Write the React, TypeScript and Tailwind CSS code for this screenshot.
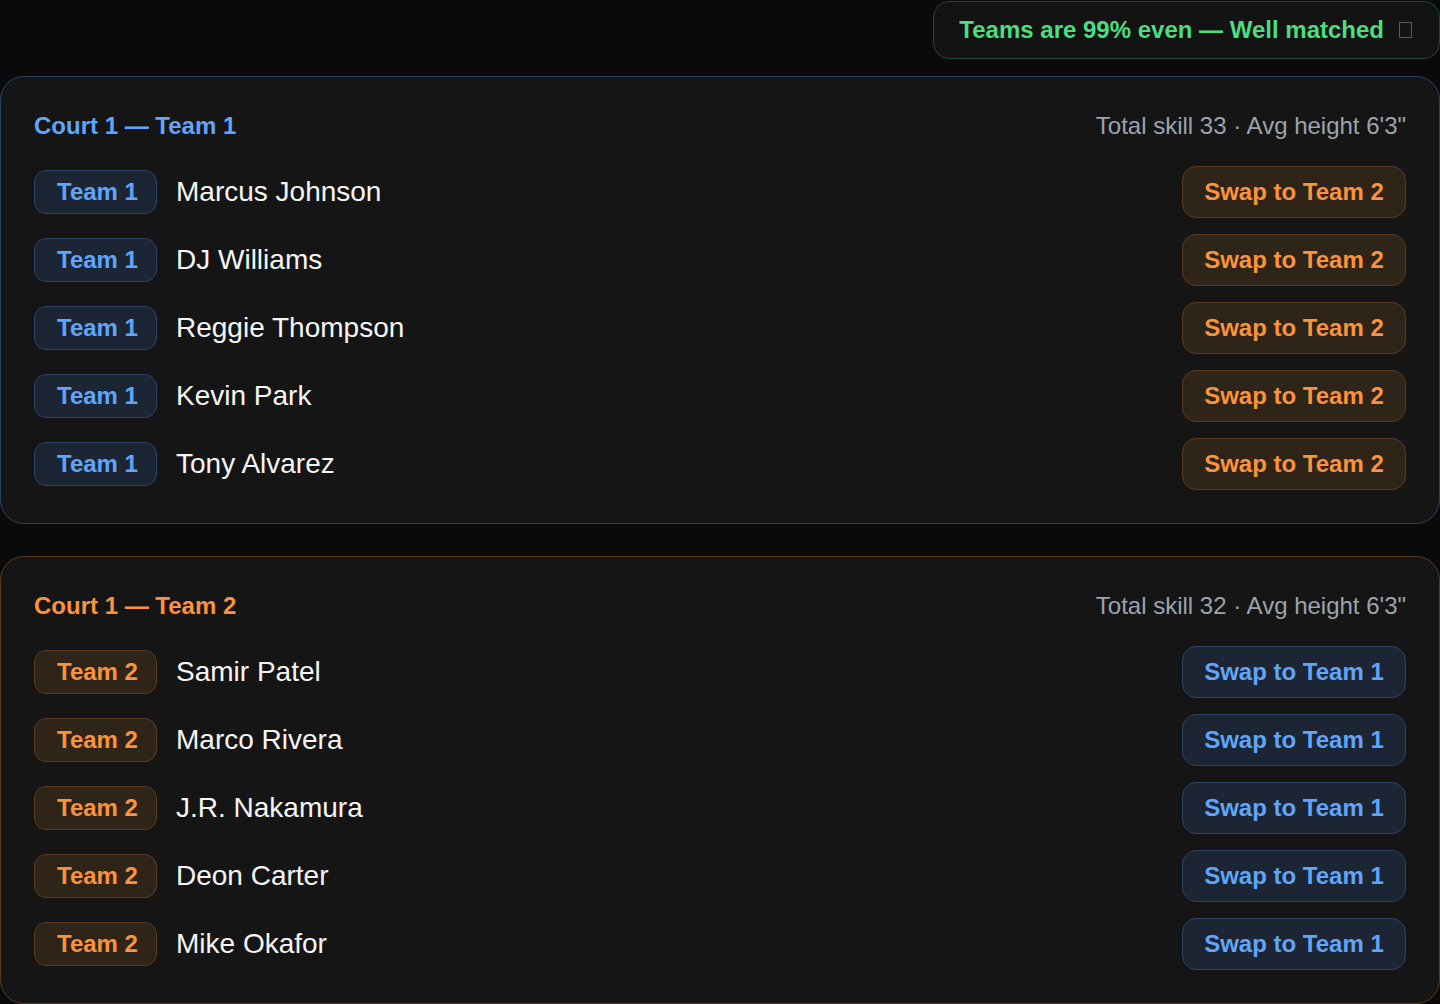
import clsx from "clsx";

type TeamNo = 1 | 2;

const team1 = ["Marcus Johnson", "DJ Williams", "Reggie Thompson", "Kevin Park", "Tony Alvarez"];
const team2 = ["Samir Patel", "Marco Rivera", "J.R. Nakamura", "Deon Carter", "Mike Okafor"];

const tone = {
  1: {
    text: "text-[#60a5fa]",
    border: "border-[#2b4263]",
    pill: "bg-[#1c2534] border-[#2b4263]",
  },
  2: {
    text: "text-[#fb923c]",
    border: "border-[#5a3b1e]",
    pill: "bg-[#2f2418] border-[#5a3b1e]",
  },
};

function PlayerRow({ name, team }: { name: string; team: TeamNo }) {
  const other: TeamNo = team === 1 ? 2 : 1;
  return (
    <div className="flex h-[52px] items-center justify-between">
      <div className="flex items-center gap-[19px]">
        <span
          className={clsx(
            "flex h-[44px] w-[123px] items-center justify-center rounded-xl border pl-1 text-[24px] font-bold",
            tone[team].pill,
            tone[team].text
          )}
        >
          Team {team}
        </span>
        <span className="text-[28px] text-[#f5f5f5]">{name}</span>
      </div>
      <button
        className={clsx(
          "flex h-[52px] w-[224px] items-center justify-center rounded-[14px] border text-[24px] font-bold",
          tone[other].pill,
          tone[other].text
        )}
      >
        Swap to Team {other}
      </button>
    </div>
  );
}

function TeamCard({ team, players, skill }: { team: TeamNo; players: string[]; skill: number }) {
  return (
    <section
      className={clsx(
        "rounded-3xl border bg-[#151515] pt-8 pr-[33px] pb-[33px] pl-[33px]",
        tone[team].border
      )}
    >
      <div className="mb-[23px] flex h-[34px] items-center justify-between">
        <h2 className={clsx("text-[24px] font-bold", tone[team].text)}>Court 1 — Team {team}</h2>
        <span className="text-[24px] text-[#9ca3af]">Total skill {skill} · Avg height 6'3"</span>
      </div>
      <div className="flex flex-col gap-4">
        {players.map((p) => (
          <PlayerRow key={p} name={p} team={team} />
        ))}
      </div>
    </section>
  );
}

export default function App() {
  return (
    <div
      className="min-h-screen bg-[#0a0a0a] pt-px"
      style={{ fontFamily: '"Liberation Sans", Arial, sans-serif' }}
    >
      <div className="flex justify-end">
        <div className="flex h-[58px] items-center gap-[15px] rounded-2xl border border-[#1f4a31] bg-[#131313] pl-[25px] pr-[27px]">
          <span className="text-[24px] font-bold text-[#4ade80]">Teams are 99% even — Well matched</span>
          <span className="h-[16px] w-[13px] border border-[#5a5a5a]" />
        </div>
      </div>
      <div className="mt-[17px] flex flex-col gap-8">
        <TeamCard team={1} players={team1} skill={33} />
        <TeamCard team={2} players={team2} skill={32} />
      </div>
    </div>
  );
}
